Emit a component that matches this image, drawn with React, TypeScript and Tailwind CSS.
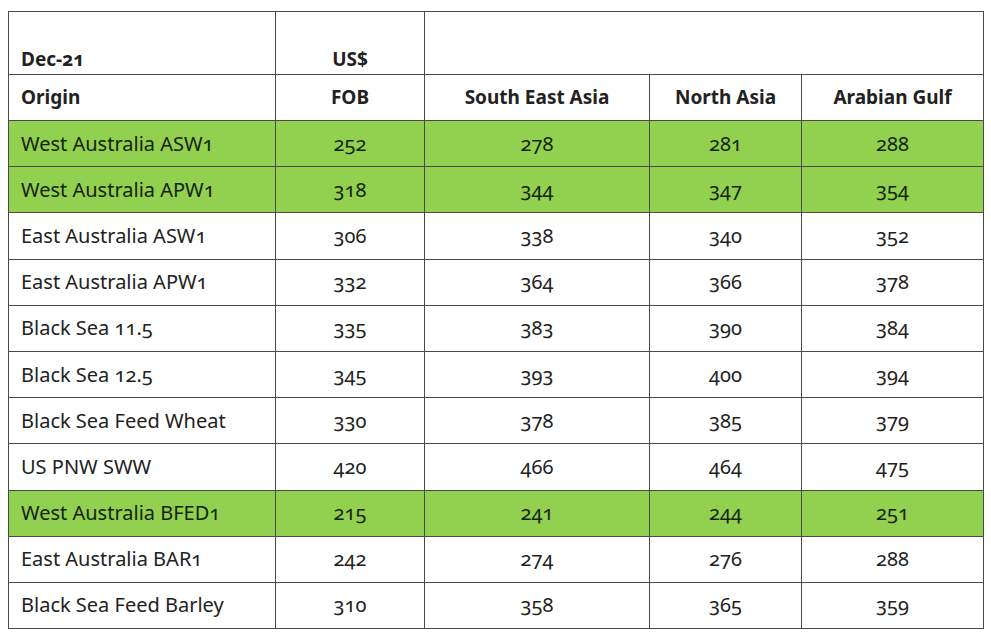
import React from "react";

const rows: { name: string; v: string[]; green?: boolean }[] = [
  { name: "West Australia ASW1", v: ["252", "278", "281", "288"], green: true },
  { name: "West Australia APW1", v: ["318", "344", "347", "354"], green: true },
  { name: "East Australia ASW1", v: ["306", "338", "340", "352"] },
  { name: "East Australia APW1", v: ["332", "364", "366", "378"] },
  { name: "Black Sea 11.5", v: ["335", "383", "390", "384"] },
  { name: "Black Sea 12.5", v: ["345", "393", "400", "394"] },
  { name: "Black Sea Feed Wheat", v: ["330", "378", "385", "379"] },
  { name: "US PNW SWW", v: ["420", "466", "464", "475"] },
  { name: "West Australia BFED1", v: ["215", "241", "244", "251"], green: true },
  { name: "East Australia BAR1", v: ["242", "274", "276", "288"] },
  { name: "Black Sea Feed Barley", v: ["310", "358", "365", "359"] },
];

export default function App() {
  return (
    <div
      className="w-[991px] h-[636px] bg-white pt-[11px] pl-[8px] overflow-hidden"
      style={{ fontFamily: '"Noto Sans", "Open Sans", sans-serif' }}
    >
      <table className="table-fixed border-collapse w-[975px] text-[20px] text-[#222] oldstyle-nums">
        <colgroup>
          <col className="w-[267px]" />
          <col className="w-[149px]" />
          <col className="w-[225px]" />
          <col className="w-[152px]" />
          <col className="w-[182px]" />
        </colgroup>
        <thead>
          <tr className="h-[63px]">
            <th className="border border-[#4a4a4a] text-left align-bottom pl-[12px] pb-[1px] font-bold text-[19px]">
              Dec-21
            </th>
            <th className="border border-[#4a4a4a] text-center align-bottom pb-[1px] font-bold text-[19px]">
              US$
            </th>
            <th colSpan={3} className="border border-[#4a4a4a]"></th>
          </tr>
          <tr className="h-[46px]">
            <th className="border border-[#4a4a4a] text-left pl-[12px] font-bold text-[19px]">Origin</th>
            <th className="border border-[#4a4a4a] text-center font-bold text-[19px]">FOB</th>
            <th className="border border-[#4a4a4a] text-center font-bold text-[19px]">South East Asia</th>
            <th className="border border-[#4a4a4a] text-center font-bold text-[19px]">North Asia</th>
            <th className="border border-[#4a4a4a] text-center font-bold text-[19px]">Arabian Gulf</th>
          </tr>
        </thead>
        <tbody>
          {rows.map((r) => (
            <tr
              key={r.name}
              className={r.green ? "h-[46.2px] bg-[#92d050] text-[#16230c]" : "h-[46.2px] bg-white"}
            >
              <td className="border border-[#4a4a4a] pl-[12px]">{r.name}</td>
              {r.v.map((x, i) => (
                <td key={i} className="border border-[#4a4a4a] text-center">
                  {x}
                </td>
              ))}
            </tr>
          ))}
        </tbody>
      </table>
    </div>
  );
}
